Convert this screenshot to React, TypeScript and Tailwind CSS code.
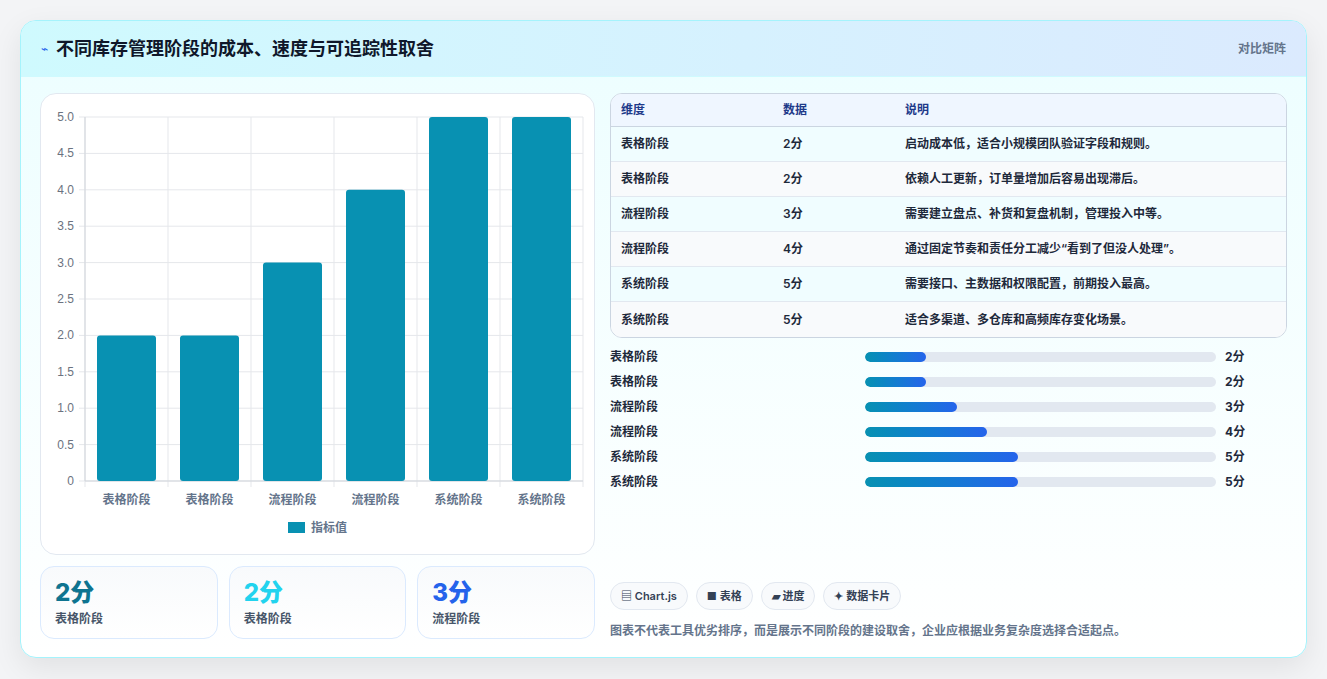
import React from "react";

const rows = [
  ["表格阶段", 2, "启动成本低，适合小规模团队验证字段和规则。"],
  ["表格阶段", 2, "依赖人工更新，订单量增加后容易出现滞后。"],
  ["流程阶段", 3, "需要建立盘点、补货和复盘机制，管理投入中等。"],
  ["流程阶段", 4, "通过固定节奏和责任分工减少“看到了但没人处理”。"],
  ["系统阶段", 5, "需要接口、主数据和权限配置，前期投入最高。"],
  ["系统阶段", 5, "适合多渠道、多仓库和高频库存变化场景。"],
] as const;

function Chart() {
  const left = 44, right = 542, top = 23, bottom = 387;
  const step = (bottom - top) / 10;
  const cw = (right - left) / 6;
  return (
    <svg width="554" height="462" viewBox="0 0 554 462" className="block">
      {Array.from({ length: 11 }).map((_, i) => {
        const y = bottom - i * step;
        return (
          <g key={i}>
            <line x1={left - 6} x2={right} y1={y} y2={y} stroke="#e5e7eb" strokeWidth="1" />
            <text x={33} y={y + 4} textAnchor="end" fontSize="12" fill="#6b7280" fontFamily="Liberation Sans, sans-serif">
              {i === 0 ? "0" : (i / 2).toFixed(1)}
            </text>
          </g>
        );
      })}
      {Array.from({ length: 7 }).map((_, i) => (
        <line key={i} x1={left + i * cw} x2={left + i * cw} y1={top} y2={bottom + 6} stroke="#e5e7eb" />
      ))}
      <line x1={left} x2={left} y1={top} y2={bottom} stroke="#d1d5db" />
      <line x1={left} x2={right} y1={bottom} y2={bottom} stroke="#d1d5db" />
      {rows.map((r, i) => {
        const h = (r[1] as number) * 2 * step;
        const x = left + i * cw + 12;
        return (
          <g key={i}>
            <rect x={x} y={bottom - h} width={59} height={h} rx={3} fill="#0891b2" />
            <text x={left + i * cw + cw / 2} y={410} textAnchor="middle" fontSize="12" fontWeight="600" fill="#64748b" fontFamily="Noto Sans CJK SC, sans-serif">
              {r[0]}
            </text>
          </g>
        );
      })}
      <rect x={247} y={428} width={17} height={11} fill="#0891b2" />
      <text x={270} y={438} fontSize="12" fontWeight="600" fill="#64748b" fontFamily="Noto Sans CJK SC, sans-serif">指标值</text>
    </svg>
  );
}

export default function App() {
  return (
    <div className="w-[1327px] h-[679px] bg-[#f3f4f6] pt-[20px] pl-[20px]" style={{ fontFamily: "Inter, 'Noto Sans CJK SC', sans-serif" }}>
      <div className="w-[1287px] h-[638px] rounded-[16px] border border-[#a5f3fc] overflow-hidden bg-gradient-to-b from-[#ecfeff] to-white shadow-[0_10px_30px_rgba(0,0,0,0.08)] flex flex-col">
        <div className="h-[56px] flex items-center justify-between px-[20px] bg-gradient-to-r from-[#cffafe] to-[#dbeafe] border-b border-[#cffafe]">
          <div className="flex items-center gap-[8px]">
            <span className="text-[#2563eb] text-[12px]">⌁</span>
            <span className="text-[18px] font-bold text-[#0f172a]">不同库存管理阶段的成本、速度与可追踪性取舍</span>
          </div>
          <span className="text-[12px] text-[#64748b] font-semibold">对比矩阵</span>
        </div>
        <div className="flex gap-[15px] px-[19px] pt-[16px]">
          <div className="w-[555px] flex flex-col gap-[11px]">
            <div className="h-[462px] rounded-[16px] border border-[#e2e8f0] bg-white overflow-hidden">
              <Chart />
            </div>
            <div className="grid grid-cols-3 gap-[11px]">
              {[["2分", "text-[#0e7490]", "表格阶段"], ["2分", "text-[#22d3ee]", "表格阶段"], ["3分", "text-[#2563eb]", "流程阶段"]].map((k, i) => (
                <div key={i} className="h-[73px] rounded-[14px] border border-[#dbeafe] bg-gradient-to-b from-[#f8fafc] to-white px-[14px] pt-[10px]">
                  <div className={`text-[24px] font-extrabold leading-[32px] ${k[1]}`}>{k[0]}</div>
                  <div className="text-[12px] font-semibold text-[#475569] leading-[16px] mt-[2px]">{k[2]}</div>
                </div>
              ))}
            </div>
          </div>
          <div className="w-[679px] flex flex-col">
            <div className="rounded-[12px] border border-[#cbd5e1] overflow-hidden bg-white">
              <div className="h-[33px] flex items-center bg-[#eff6ff] border-b border-[#cbd5e1] text-[12px] font-bold text-[#1e3a8a]">
                <div className="w-[172px] pl-[10px]">维度</div>
                <div className="w-[122px]">数据</div>
                <div>说明</div>
              </div>
              {rows.map((r, i) => (
                <div key={i} className={`h-[35px] flex items-center text-[12px] font-semibold text-[#1e293b] ${i < 5 ? "border-b border-[#e2e8f0]" : ""} ${i % 2 === 0 ? "bg-[#f0fdff]" : "bg-[#f8fafc]"}`}>
                  <div className="w-[172px] pl-[10px]">{r[0]}</div>
                  <div className="w-[122px]">{r[1]}分</div>
                  <div>{r[2]}</div>
                </div>
              ))}
            </div>
            <div className="flex flex-col gap-[9px] mt-[11px]">
              {rows.map((r, i) => (
                <div key={i} className="h-[16px] flex items-center text-[12px] font-semibold text-[#1e293b]">
                  <div className="w-[255px]">{r[0]}</div>
                  <div className="w-[351px] h-[10px] rounded-full bg-[#e2e8f0] overflow-hidden">
                    <div className="h-full rounded-full bg-gradient-to-r from-[#0891b2] to-[#2563eb]" style={{ width: `${(r[1] as number) * 8.7}%` }} />
                  </div>
                  <div className="ml-[9px] font-bold">{r[1]}分</div>
                </div>
              ))}
            </div>
            <div className="flex gap-[8px] mt-[92px]">
              {["▤ Chart.js", "■ 表格", "▰ 进度", "✦ 数据卡片"].map((c) => (
                <span key={c} className="h-[28px] px-[10px] rounded-full border border-[#e2e8f0] bg-[#f8fafc] flex items-center text-[11px] font-semibold text-[#334155]">{c}</span>
              ))}
            </div>
            <div className="mt-[12px] text-[12px] font-semibold text-[#64748b]">图表不代表工具优劣排序，而是展示不同阶段的建设取舍，企业应根据业务复杂度选择合适起点。</div>
          </div>
        </div>
      </div>
    </div>
  );
}
